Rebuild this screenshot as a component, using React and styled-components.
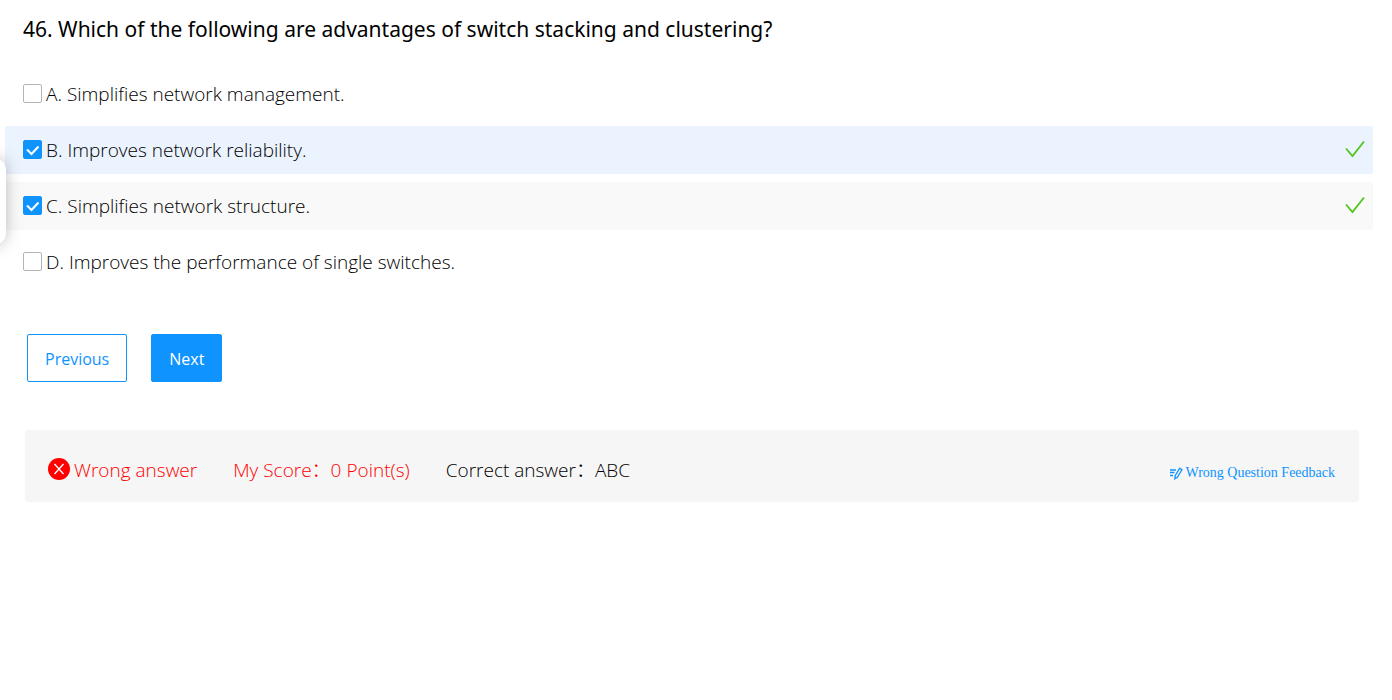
import React from "react";
import styled, { createGlobalStyle } from "styled-components";

const GlobalStyle = createGlobalStyle`
  * { box-sizing: border-box; }
  body {
    margin: 0;
    background: #fff;
    color: #000;
    font-family: "Open Sans", "Noto Sans", "Noto Sans CJK SC", sans-serif;
    font-size: 19px;
    line-height: 24px;
  }
`;

const Page = styled.main`
  padding: 15px 19px 24px 5px;
`;

const Question = styled.h1`
  margin: 0;
  padding: 0 18px;
  font-family: "Noto Sans", sans-serif;
  font-size: 21px;
  font-weight: 450;
  line-height: 28px;
`;

const Options = styled.div`
  display: flex;
  flex-direction: column;
  gap: 8px;
  margin-top: 27px;
`;

const Option = styled.label`
  display: flex;
  align-items: center;
  gap: 4px;
  height: 48px;
  padding: 0 8px 0 18px;
  border-radius: 2px;
  font-weight: 300;
  background: ${(p) => p.$background || "transparent"};
`;

const OptionText = styled.span`
  flex: 1;
`;

const Box = styled.span`
  display: grid;
  width: 19px;
  height: 19px;
  margin-bottom: 2px;

  > * { grid-area: 1 / 1; }
`;

const BoxInput = styled.input`
  appearance: none;
  width: 19px;
  height: 19px;
  margin: 0;
  border: 1px solid #b4b4b4;
  border-radius: 2px;
  background: #fff;

  &:checked {
    border-color: #0f94ff;
    background: #0f94ff;
  }
`;

const BoxTick = styled.svg`
  width: 19px;
  height: 19px;
  pointer-events: none;
`;

const CorrectMark = styled.svg`
  width: 20px;
  height: 20px;
`;

const Actions = styled.div`
  display: flex;
  gap: 24px;
  margin: 48px 22px 0;
`;

const ActionButton = styled.button`
  height: 48px;
  padding: 2px 17px 0;
  border: 1px solid #0f94ff;
  border-radius: 2px;
  background: ${(p) => (p.$primary ? "#0f94ff" : "#fff")};
  color: ${(p) => (p.$primary ? "#fff" : "#0f94ff")};
  font: inherit;
  font-size: 16px;
`;

const Result = styled.section`
  display: flex;
  align-items: center;
  gap: 36px;
  min-height: 72px;
  margin: 48px 14px 0 20px;
  padding: 8px 24px 0 23px;
  border-radius: 4px;
  background: #f6f6f6;
  font-weight: 300;
`;

const ResultItem = styled.span`
  display: flex;
  align-items: center;
  gap: 4px;
  color: ${(p) => (p.$error ? "#f00" : "#000")};
`;

const WrongIcon = styled.svg`
  width: 22px;
  height: 22px;
  margin-bottom: 2px;
`;

const Feedback = styled.a`
  display: flex;
  align-items: center;
  gap: 2px;
  margin-left: auto;
  padding-top: 5px;
  color: #0f94ff;
  font-family: "Liberation Serif", serif;
  font-size: 14px;
  font-weight: 400;
  text-decoration: none;
`;

const FeedbackIcon = styled.svg`
  width: 14px;
  height: 14px;
`;

const Drawer = styled.button`
  position: fixed;
  top: 158px;
  left: -20px;
  width: 26px;
  height: 87px;
  padding: 0;
  border: 0;
  border-radius: 12px;
  background: #fff;
  box-shadow: 0 0 16px rgba(0, 0, 0, 0.25);
`;

const options = [
  { id: "A", text: "Simplifies network management." },
  { id: "B", text: "Improves network reliability.", checked: true, background: "#ebf3ff" },
  { id: "C", text: "Simplifies network structure.", checked: true, background: "#f9f9f9" },
  { id: "D", text: "Improves the performance of single switches." },
];

function AnswerOption({ id, text, checked, background }) {
  return (
    <Option $background={background}>
      <Box>
        <BoxInput type="checkbox" defaultChecked={checked} />
        {checked && (
          <BoxTick viewBox="0 0 19 19" fill="none" stroke="#fff" strokeWidth="2" aria-hidden="true">
            <path d="M4 9.500 8.500 14 15.500 6.500" />
          </BoxTick>
        )}
      </Box>
      <OptionText>{id}. {text}</OptionText>
      {checked && (
        <CorrectMark viewBox="0 0 20 20" fill="none" stroke="#52c41a" strokeWidth="1.8" aria-hidden="true">
          <path d="M1 8.500 7.500 16 19 1.500" />
        </CorrectMark>
      )}
    </Option>
  );
}

export default function App() {
  return (
    <>
      <GlobalStyle />
      <Page>
        <Question>46. Which of the following are advantages of switch stacking and clustering?</Question>
        <Options>
          {options.map((option) => (
            <AnswerOption key={option.id} {...option} />
          ))}
        </Options>
        <Actions>
          <ActionButton type="button">Previous</ActionButton>
          <ActionButton type="button" $primary>Next</ActionButton>
        </Actions>
        <Result>
          <ResultItem $error>
            <WrongIcon viewBox="0 0 22 22" aria-hidden="true">
              <circle cx="11" cy="11" r="11" fill="#f00" />
              <path d="M6.500 6 15.500 16M15.500 6 6.500 16" stroke="#fff" strokeWidth="1.3" />
            </WrongIcon>
            Wrong answer
          </ResultItem>
          <ResultItem $error>My Score：0 Point(s)</ResultItem>
          <ResultItem>Correct answer：ABC</ResultItem>
          <Feedback href="#feedback">
            <FeedbackIcon viewBox="0 0 14 14" fill="none" stroke="currentColor" strokeWidth="1.3" aria-hidden="true">
              <path d="M1 4h6M1 6.500h4.500M1 9.500h3M5.800 12.800 6.200 9.700 10.600 2.300 13 3.600 8.400 11.300Z" />
            </FeedbackIcon>
            Wrong Question Feedback
          </Feedback>
        </Result>
      </Page>
      <Drawer type="button" aria-label="Open question list" />
    </>
  );
}
